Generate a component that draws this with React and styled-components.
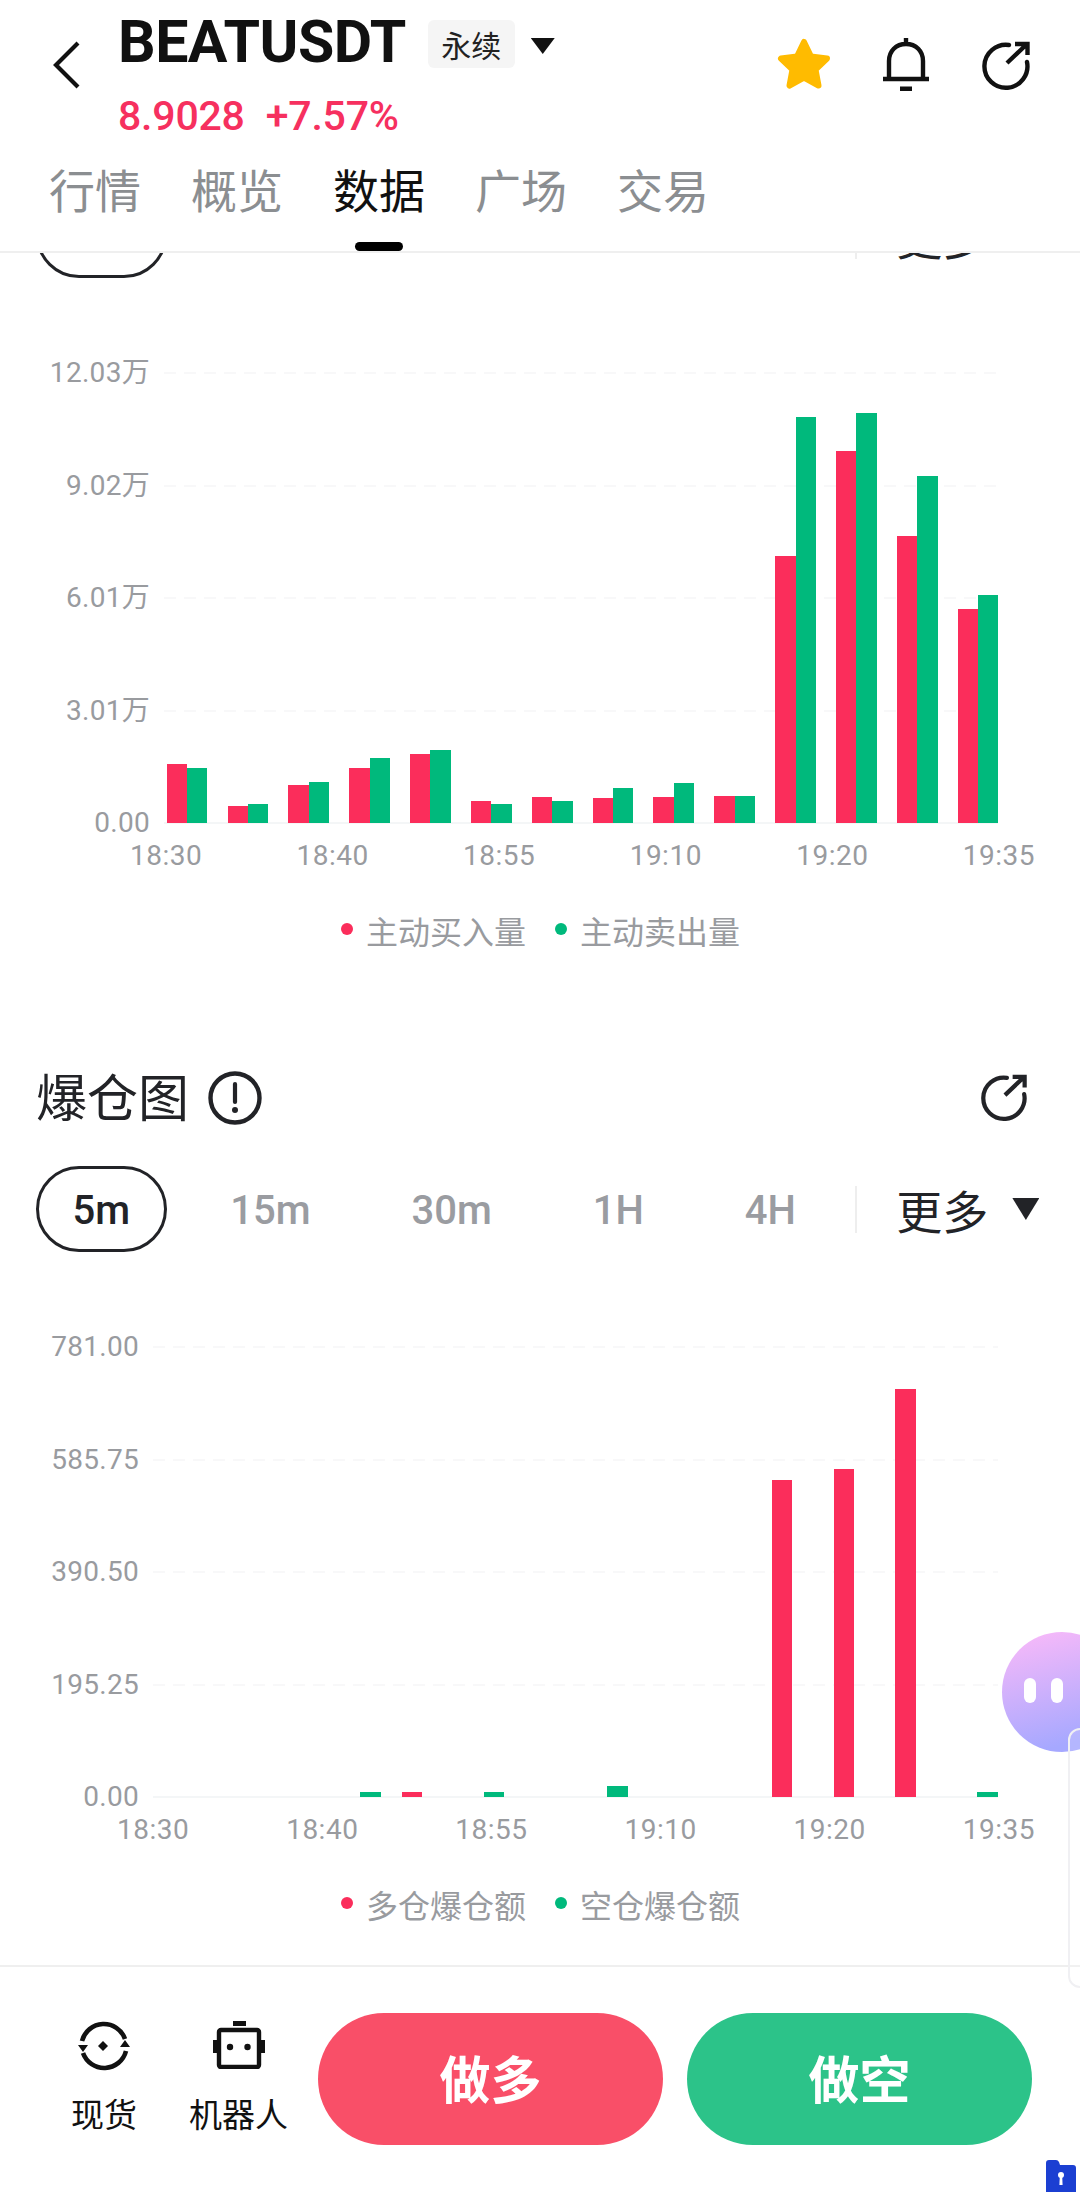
import React from "react";
import styled, { createGlobalStyle } from "styled-components";

const GlobalStyle = createGlobalStyle`
  html, body {
    margin: 0;
    padding: 0;
    background: #fff;
  }
  * {
    box-sizing: border-box;
  }
`;

const RED = "#fb2d5b";
const GREEN = "#00b97c";
const INK = "#222327";
const GREY = "#999b9f";

const Frame = styled.div`
  position: relative;
  display: flex;
  flex-direction: column;
  width: 1080px;
  height: 2192px;
  overflow: hidden;
  background: #fff;
  color: ${INK};
  font-family: Roboto, "Noto Sans CJK SC", sans-serif;
`;

/* header */
const Header = styled.header`
  flex: none;
  height: 253px;
  border-bottom: 2px solid #efefef;
  background: #fff;
  z-index: 1;
`;

const TopRow = styled.div`
  display: flex;
  height: 161px;
`;

const BackButton = styled.div`
  flex: none;
  width: 118px;
  padding: 41px 0 0 53px;
`;

const TitleBlock = styled.div`
  flex: 1;
  padding-top: 12px;
`;

const TitleRow = styled.div`
  display: flex;
  align-items: flex-start;
`;

const Title = styled.h1`
  margin: 0;
  font-size: 59px;
  line-height: 60px;
  font-weight: 700;
  letter-spacing: -0.5px;
  color: #111;
`;

const Badge = styled.span`
  width: 87px;
  height: 48px;
  margin: 8px 0 0 22px;
  display: flex;
  align-items: center;
  justify-content: center;
  border-radius: 6px;
  background: #f5f5f5;
  font-size: 30px;
  color: #222;
`;

const BadgeCaret = styled.span`
  width: 24px;
  height: 16px;
  margin: 26px 0 0 16px;
  background: #111;
  clip-path: polygon(0 0, 100% 0, 50% 100%);
`;

const PriceRow = styled.div`
  display: flex;
  gap: 21px;
  margin-top: 20px;
  font-size: 41px;
  line-height: 48px;
  font-weight: 500;
  color: #f6305f;
  letter-spacing: -0.2px;
`;

const Actions = styled.div`
  flex: none;
  display: flex;
  align-items: flex-start;
  width: 304px;
  padding-top: 37px;
`;

const ActionSlot = styled.div`
  flex: none;
  width: ${(p) => p.$w}px;
  padding-top: ${(p) => p.$top || 0}px;
`;

const Tabs = styled.nav`
  display: flex;
  gap: 50px;
  padding-left: 49px;
`;

const Tab = styled.div`
  display: flex;
  flex-direction: column;
  align-items: center;
  font-size: 46px;
  line-height: 62px;
  color: ${(p) => (p.$active ? "#111" : "#8b8e91")};
`;

const TabMark = styled.span`
  width: 48px;
  height: 9px;
  margin-top: 19px;
  border-radius: 5px;
  background: #000;
`;

/* scrolled content */
const Scroller = styled.main`
  flex: 1;
  min-height: 0;
  overflow: hidden;
`;

const ScrollBody = styled.div`
  margin-top: -61px;
`;

const FilterRow = styled.div`
  display: flex;
  align-items: center;
  height: 86px;
  padding-left: 36px;
  gap: 26.5px;
`;

const Filter = styled.span`
  height: 86px;
  display: flex;
  align-items: center;
  padding: 2px ${(p) => (p.$active ? 33.5 : 34.2)}px 0;
  border: 3px solid ${(p) => (p.$active ? INK : "transparent")};
  border-radius: 43px;
  font-size: 40px;
  font-weight: 500;
  color: ${(p) => (p.$active ? INK : "#9a9ca1")};
`;

const FilterDivider = styled.span`
  flex: none;
  width: 2px;
  height: 47px;
  margin-left: -4.6px;
  background: #eeeeee;
`;

const MoreButton = styled.div`
  flex: none;
  display: flex;
  align-items: center;
  gap: 24px;
  margin-left: 13px;
  font-size: 46px;
  white-space: nowrap;
  color: ${INK};
`;

const MoreCaret = styled.span`
  width: 27px;
  height: 22px;
  background: ${INK};
  clip-path: polygon(0 0, 100% 0, 50% 100%);
`;

const Chart = styled.section`
  margin-top: 95px;
`;

const Plot = styled.div`
  display: grid;
  height: 450px;
  > * {
    grid-area: 1 / 1;
  }
`;

const GridLayer = styled.div`
  display: flex;
  flex-direction: column;
  justify-content: space-between;
`;

const GridRow = styled.div`
  display: flex;
  align-items: center;
  height: 0;
`;

const AxisLabel = styled.span`
  flex: none;
  width: ${(p) => p.$w}px;
  text-align: right;
  font-size: 28px;
  letter-spacing: 0.3px;
  line-height: 34px;
  color: ${GREY};
`;

const GridLine = styled.span`
  flex: none;
  height: 2px;
  margin-left: 14px;
  width: ${(p) => 998 - p.$w - 14}px;
  background: ${(p) =>
    p.$base
      ? "#f4f6f7"
      : "repeating-linear-gradient(90deg, #f8f8f9 0 12px, transparent 12px 20px)"};
`;

const BarLayer = styled.div`
  display: flex;
  align-items: flex-end;
  padding-left: ${(p) => p.$left}px;
`;

const BarSlot = styled.div`
  flex: none;
  display: flex;
  align-items: flex-end;
  width: ${(p) => p.$period}px;
`;

const Bar = styled.span`
  flex: none;
  width: 20.4px;
  background: ${(p) => (p.$green ? GREEN : RED)};
`;

const TimeAxis = styled.div`
  display: flex;
  justify-content: space-between;
  margin-top: 16px;
  padding: 0 45px 0 ${(p) => p.$left}px;
  font-size: 28px;
  letter-spacing: 0.5px;
  line-height: 34px;
  color: ${GREY};
`;

const Legend = styled.div`
  display: flex;
  align-items: center;
  margin-top: 40px;
  padding-left: 341px;
  font-size: 32px;
  line-height: 40px;
  color: ${GREY};
`;

const LegendDot = styled.span`
  width: 12px;
  height: 12px;
  margin: 0 13px 8px ${(p) => (p.$green ? 29 : 0)}px;
  border-radius: 50%;
  background: ${(p) => (p.$green ? GREEN : RED)};
`;

const SectionHead = styled.div`
  display: flex;
  align-items: center;
  height: 54px;
  margin-top: 118px;
  padding: 0 52px 0 36px;
`;

const SectionTitle = styled.h2`
  margin: 0;
  padding-top: 3px;
  font-size: 51px;
  font-weight: 400;
  line-height: 54px;
  color: ${INK};
`;

const InfoSlot = styled.div`
  display: flex;
  margin-left: 19px;
`;

const SectionHeadEnd = styled.div`
  margin-left: auto;
  display: flex;
`;

const SectionFilters = styled(FilterRow)`
  margin-top: 41px;
`;

/* footer */
const Footer = styled.footer`
  flex: none;
  height: 227px;
  display: flex;
  align-items: flex-start;
  padding: 46px 49px 0 71px;
  border-top: 2px solid #efefef;
  background: #fff;
  z-index: 1;
`;

const Tool = styled.div`
  flex: none;
  display: flex;
  flex-direction: column;
  align-items: center;
  margin-right: ${(p) => p.$gap}px;
  font-size: 33px;
  line-height: 40px;
  color: #111;
`;

const ToolIcon = styled.div`
  height: 50px;
  margin: 8px 0 25px;
`;

const TradeButton = styled.button`
  flex: none;
  width: 345px;
  height: 132px;
  margin-left: ${(p) => p.$gap}px;
  padding: 0 0 4px;
  border: 0;
  border-radius: 66px;
  background: ${(p) => (p.$green ? "#2cc389" : "#f94f68")};
  color: #fff;
  font-family: inherit;
  font-size: 51px;
  font-weight: 700;
`;

/* floating bits */
const Blob = styled.div`
  position: absolute;
  left: 1002px;
  top: 1632px;
  width: 120px;
  height: 120px;
  display: flex;
  align-items: center;
  gap: 15px;
  padding: 0 0 4px 22px;
  border-radius: 50%;
  background: linear-gradient(165deg, #f7b9f9 5%, #a6a8ff 85%);
  z-index: 2;
`;

const BlobEye = styled.span`
  width: 12px;
  height: 25px;
  border-radius: 6px;
  background: #fff;
`;

const SidePanel = styled.div`
  position: absolute;
  left: 1068px;
  top: 1728px;
  width: 40px;
  height: 260px;
  border: 2px solid #f0f0f3;
  border-radius: 12px;
  background: rgba(255, 255, 255, 0.16);
  z-index: 3;
`;

const VaultBadge = styled.div`
  position: absolute;
  left: 1046px;
  top: 2160px;
  z-index: 3;
`;

/* icons */
const BackIcon = () => (
  <svg width="28" height="48" viewBox="0 0 28 48" fill="none">
    <path d="M25 2 L3 24 L25 46" stroke="#111" strokeWidth="4.2" />
  </svg>
);

const StarIcon = () => (
  <svg width="56" height="54" viewBox="0 0 56 54">
    <path
      d="M28 5 L35 19.5 L51 21.5 L39.5 32.5 L42.5 48.5 L28 40.5 L13.5 48.5 L16.5 32.5 L5 21.5 L21 19.5 Z"
      fill="#ffbb00"
      stroke="#ffbb00"
      strokeWidth="6"
      strokeLinejoin="round"
    />
  </svg>
);

const BellIcon = () => (
  <svg width="48" height="54" viewBox="0 0 48 54" fill="none">
    <path
      d="M24 1 V6 M7 41 V24 C7 14 14 7 24 7 C34 7 41 14 41 24 V41 M1 42 H47"
      stroke="#111"
      strokeWidth="4.4"
    />
    <path d="M18 49.5 H30 V54 H18 Z" fill="#111" />
  </svg>
);

const ShareIcon = ({ size = 50, color = "#111" }) => (
  <svg width={size} height={size} viewBox="0 0 50 50" fill="none">
    <path
      d="M28 4 A21.5 21.5 0 1 0 46 21"
      stroke={color}
      strokeWidth="4.4"
      strokeLinecap="round"
    />
    <path d="M26 22 L46 3 M34 3 H46.5 V14" stroke={color} strokeWidth="4.4" />
  </svg>
);

const InfoIcon = () => (
  <svg width="54" height="54" viewBox="0 0 54 54" fill="none">
    <circle cx="27" cy="27" r="24.5" stroke={INK} strokeWidth="4.4" />
    <path d="M27 13 V31" stroke={INK} strokeWidth="4.2" strokeLinecap="round" />
    <circle cx="27" cy="39" r="3" fill={INK} />
  </svg>
);

const SpotIcon = () => (
  <svg width="52" height="50" viewBox="0 0 52 50" fill="none">
    <path
      d="M4 20 A22.5 22.5 0 0 1 47 18 M48 30 A22.5 22.5 0 0 1 5 32"
      stroke="#111"
      strokeWidth="4.6"
    />
    <path d="M25 20 L30 25 L25 30 L20 25 Z" fill="#111" />
    <path d="M0 24 L10 24 L5 31 Z M52 26 L42 26 L47 19 Z" fill="#111" />
  </svg>
);

const RobotIcon = () => (
  <svg width="52" height="48" viewBox="0 0 52 48" fill="none">
    <rect x="20" y="0" width="13" height="5" fill="#111" />
    <rect x="6" y="9" width="40" height="37" rx="2" stroke="#111" strokeWidth="4.4" />
    <rect x="0" y="19" width="4" height="13" fill="#111" />
    <rect x="48" y="19" width="4" height="13" fill="#111" />
    <circle cx="17" cy="26" r="3.2" fill="#111" />
    <circle cx="34.5" cy="26" r="3.2" fill="#111" />
  </svg>
);

const VaultIcon = () => (
  <svg width="30" height="34" viewBox="0 0 30 34">
    <path
      d="M0 3 Q0 0 3 0 H10 Q12 0 13 2 L14 5 H27 Q30 5 30 8 V34 H0 Z"
      fill="#1b3fd2"
    />
    <circle cx="15" cy="15" r="3" fill="#fff" />
    <path d="M13.8 16 H16.2 L16.6 25 H13.4 Z" fill="#fff" />
  </svg>
);

const flowChart = {
  left: 166.7,
  period: 60.85,
  axis: 150,
  timeLeft: 130,
  yLabels: ["12.03万", "9.02万", "6.01万", "3.01万", "0.00"],
  times: ["18:30", "18:40", "18:55", "19:10", "19:20", "19:35"],
  legend: ["主动买入量", "主动卖出量"],
  red: [59, 17, 38, 55, 69, 22, 26.5, 25, 26, 27.5, 267, 372, 287, 214],
  green: [55.5, 19, 41, 65, 73.5, 19, 22, 35.5, 40, 27.5, 406, 410, 347, 228],
};

const liquidationChart = {
  left: 155,
  period: 61.7,
  axis: 139,
  timeLeft: 117,
  yLabels: ["781.00", "585.75", "390.50", "195.25", "0.00"],
  times: ["18:30", "18:40", "18:55", "19:10", "19:20", "19:35"],
  legend: ["多仓爆仓额", "空仓爆仓额"],
  red: [0, 0, 0, 0, 5.5, 0, 0, 0, 0, 0, 317, 328, 408.5, 0],
  green: [0, 0, 0, 5.5, 0, 5.5, 0, 11.5, 0, 0, 0, 0, 0, 5.5],
};

const BarChart = ({ data }) => (
  <Chart>
    <Plot>
      <GridLayer>
        {data.yLabels.map((label, i) => (
          <GridRow key={label}>
            <AxisLabel $w={data.axis}>{label}</AxisLabel>
            <GridLine $w={data.axis} $base={i === data.yLabels.length - 1} />
          </GridRow>
        ))}
      </GridLayer>
      <BarLayer $left={data.left}>
        {data.red.map((h, i) => (
          <BarSlot key={i} $period={data.period}>
            <Bar style={{ height: h }} />
            <Bar $green style={{ height: data.green[i] }} />
          </BarSlot>
        ))}
      </BarLayer>
    </Plot>
    <TimeAxis $left={data.timeLeft}>
      {data.times.map((t) => (
        <span key={t}>{t}</span>
      ))}
    </TimeAxis>
    <Legend>
      <LegendDot />
      <span>{data.legend[0]}</span>
      <LegendDot $green />
      <span>{data.legend[1]}</span>
    </Legend>
  </Chart>
);

const Filters = ({ Row = FilterRow }) => (
  <Row>
    <Filter $active>5m</Filter>
    <Filter>15m</Filter>
    <Filter>30m</Filter>
    <Filter>1H</Filter>
    <Filter>4H</Filter>
    <FilterDivider />
    <MoreButton>
      更多
      <MoreCaret />
    </MoreButton>
  </Row>
);

const App = () => {
  return (
    <Frame>
      <GlobalStyle />
      <Header>
        <TopRow>
          <BackButton>
            <BackIcon />
          </BackButton>
          <TitleBlock>
            <TitleRow>
              <Title>BEATUSDT</Title>
              <Badge>永续</Badge>
              <BadgeCaret />
            </TitleRow>
            <PriceRow>
              <span>8.9028</span>
              <span>+7.57%</span>
            </PriceRow>
          </TitleBlock>
          <Actions>
            <ActionSlot $w={106}>
              <StarIcon />
            </ActionSlot>
            <ActionSlot $w={99}>
              <BellIcon />
            </ActionSlot>
            <ActionSlot $w={50} $top={4}>
              <ShareIcon />
            </ActionSlot>
          </Actions>
        </TopRow>
        <Tabs>
          <Tab>行情</Tab>
          <Tab>概览</Tab>
          <Tab $active>
            数据
            <TabMark />
          </Tab>
          <Tab>广场</Tab>
          <Tab>交易</Tab>
        </Tabs>
      </Header>

      <Scroller>
        <ScrollBody>
          <Filters />
          <BarChart data={flowChart} />
          <SectionHead>
            <SectionTitle>爆仓图</SectionTitle>
            <InfoSlot>
              <InfoIcon />
            </InfoSlot>
            <SectionHeadEnd>
              <ShareIcon size={48} color={INK} />
            </SectionHeadEnd>
          </SectionHead>
          <Filters Row={SectionFilters} />
          <BarChart data={liquidationChart} />
        </ScrollBody>
      </Scroller>

      <Footer>
        <Tool $gap={52}>
          <ToolIcon>
            <SpotIcon />
          </ToolIcon>
          现货
        </Tool>
        <Tool $gap={0}>
          <ToolIcon>
            <RobotIcon />
          </ToolIcon>
          机器人
        </Tool>
        <TradeButton $gap={30}>做多</TradeButton>
        <TradeButton $gap={24} $green>
          做空
        </TradeButton>
      </Footer>

      <Blob>
        <BlobEye />
        <BlobEye />
      </Blob>
      <SidePanel />
      <VaultBadge>
        <VaultIcon />
      </VaultBadge>
    </Frame>
  );
};

export default App;
